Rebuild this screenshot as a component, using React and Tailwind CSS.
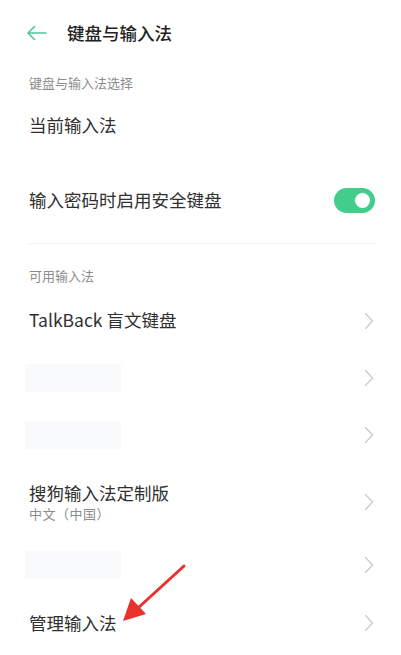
import React from "react";

function Chevron() {
  return (
    <svg width="10" height="18" viewBox="0 0 10 18" className="shrink-0">
      <path d="M1.5 1.5 L8.5 9 L1.5 16.5" fill="none" stroke="#cacaca" strokeWidth="1.3" strokeLinecap="round" strokeLinejoin="round" />
    </svg>
  );
}

function Row({ h, children }) {
  return (
    <div className={`flex items-center justify-between pr-[27px] ${h}`}>
      {children}
      <Chevron />
    </div>
  );
}

function Blank() {
  return <div className="h-[28px] w-[96px] -ml-[4px] bg-[#f9fafc]" />;
}

export default function App() {
  return (
    <div
      className="relative w-[401px] h-[655px] overflow-hidden bg-white pl-[29px] text-[#303030]"
      style={{ fontFamily: '"Noto Sans CJK SC", "Noto Sans", sans-serif' }}
    >
      {/* header */}
      <div className="flex items-center h-[66px] -ml-[3px]">
        <svg width="22" height="16" viewBox="0 0 22 16">
          <path d="M20 8 H2 M8.5 1.5 L2 8 L8.5 14.5" fill="none" stroke="#4fc7a0" strokeWidth="1.6" strokeLinecap="round" strokeLinejoin="round" />
        </svg>
        <span className="ml-[19px] text-[17.5px] font-medium text-[#222]">键盘与输入法</span>
      </div>

      <div className="flex items-center h-[34px] text-[13px] text-[#8c8c8c]">键盘与输入法选择</div>
      <div className="flex items-center h-[50px] text-[17.5px]">当前输入法</div>

      <div className="mt-[7px] flex items-center justify-between h-[86px] pr-[26px]">
        <span className="text-[17.5px]">输入密码时启用安全键盘</span>
        <div className="flex items-center justify-end w-[41px] h-[25px] rounded-full bg-[#42cd8d] pr-[5px]">
          <div className="w-[15px] h-[15px] rounded-full bg-white" />
        </div>
      </div>

      <div className="h-px bg-[#efefef] mr-[25px]" />

      <div className="flex items-center h-[48px] pt-[16px] text-[13px] text-[#8c8c8c]">可用输入法</div>

      <Row h="h-[57px]">
        <span className="text-[17.5px]">TalkBack 盲文键盘</span>
      </Row>
      <Row h="h-[57px]">
        <Blank />
      </Row>
      <Row h="h-[57px]">
        <Blank />
      </Row>
      <Row h="h-[77px]">
        <div className="flex flex-col">
          <span className="text-[17.5px] leading-[24px]">搜狗输入法定制版</span>
          <span className="text-[13px] leading-[18px] tracking-[0.5px] text-[#8c8c8c]">中文（中国）</span>
        </div>
      </Row>
      <Row h="h-[50px]">
        <Blank />
      </Row>
      <Row h="h-[66px]">
        <span className="text-[17.5px]">管理输入法</span>
      </Row>

      {/* red annotation arrow */}
      <svg className="absolute left-0 top-0 pointer-events-none" width="401" height="655" viewBox="0 0 401 655">
        <line x1="184" y1="566" x2="138" y2="608" stroke="#e8322b" strokeWidth="3" strokeLinecap="round" />
        <polygon points="123,621 131,598 146,614" fill="#e8322b" />
      </svg>
    </div>
  );
}
